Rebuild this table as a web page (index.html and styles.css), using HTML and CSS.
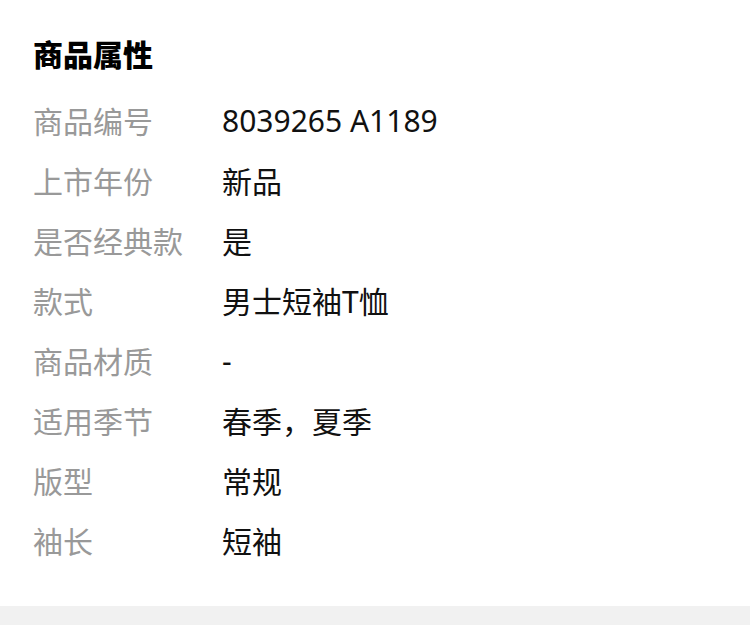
FILE: index.html
```html
<!DOCTYPE html>
<html lang="zh-CN">
<head>
    <meta charset="UTF-8">
    <meta name="viewport" content="width=device-width, initial-scale=1.0">
    <title>商品属性</title>
    <link rel="stylesheet" href="styles.css">
</head>
<body>
<div class="attr-card">
    <h2 class="attr-title">商品属性</h2>
    <div class="attr-list">
        <div class="attr-row"><span class="attr-label">商品编号</span><span class="attr-value">8039265 A1189</span></div>
        <div class="attr-row"><span class="attr-label">上市年份</span><span class="attr-value">新品</span></div>
        <div class="attr-row"><span class="attr-label">是否经典款</span><span class="attr-value">是</span></div>
        <div class="attr-row"><span class="attr-label">款式</span><span class="attr-value">男士短袖T恤</span></div>
        <div class="attr-row"><span class="attr-label">商品材质</span><span class="attr-value">-</span></div>
        <div class="attr-row"><span class="attr-label">适用季节</span><span class="attr-value">春季，夏季</span></div>
        <div class="attr-row"><span class="attr-label">版型</span><span class="attr-value">常规</span></div>
        <div class="attr-row"><span class="attr-label">袖长</span><span class="attr-value">短袖</span></div>
    </div>
</div>
<div class="footer-gap"></div>
</body>
</html>
```

FILE: styles.css
```css
body {
    margin: 0;
    padding: 0;
    background-color: #f1f1f1;
    font-family: "Noto Sans", "Noto Sans CJK SC", sans-serif;
}

.attr-card {
    background-color: #ffffff;
    padding: 40px 33px 36px;
}

.attr-title {
    margin: 0 0 20px;
    font-size: 30px;
    line-height: 30px;
    font-weight: 900;
    color: #000000;
}

.attr-row {
    display: flex;
    height: 60px;
    align-items: center;
    font-size: 30px;
}

.attr-label {
    width: 189px;
    flex-shrink: 0;
    color: #999999;
}

.attr-value {
    color: #111111;
}

.footer-gap {
    height: 19px;
}
```
